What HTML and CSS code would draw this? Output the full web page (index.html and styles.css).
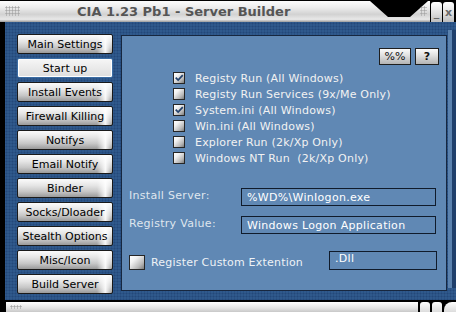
FILE: index.html
```html
<!DOCTYPE html>
<html lang="en">
  <head>
    <meta charset="UTF-8" />
    <meta name="viewport" content="width=device-width, initial-scale=1.0" />
    <title>CIA 1.23 Pb1 - Server Builder</title>
    <link rel="stylesheet" href="styles.css">
  </head>
  <body>
    <div class="window">
      <header class="titlebar">
        <div class="title-main">
          <span class="grip"></span>
          <span class="title">CIA 1.23 Pb1 - Server Builder</span>
          <span class="grip grip-right"></span>
        </div>
        <span class="winbtn">_</span>
        <span class="winbtn">x</span>
      </header>

      <div class="body">
        <div class="edge"></div>
        <div class="frame">
          <nav class="sidebar">
            <button class="side-btn">Main Settings</button>
            <button class="side-btn active">Start up</button>
            <button class="side-btn">Install Events</button>
            <button class="side-btn">Firewall Killing</button>
            <button class="side-btn">Notifys</button>
            <button class="side-btn">Email Notify</button>
            <button class="side-btn">Binder</button>
            <button class="side-btn">Socks/Dloader</button>
            <button class="side-btn">Stealth Options</button>
            <button class="side-btn">Misc/Icon</button>
            <button class="side-btn">Build Server</button>
          </nav>

          <main class="panel">
            <div class="toolbar">
              <button class="tool-btn wide">%%</button>
              <button class="tool-btn">?</button>
            </div>

            <ul class="checklist">
              <li><span class="check"><svg viewBox="0 0 12 12"><path d="M2 5.5 L5 8.5 L10.5 2.5" /></svg></span>Registy Run (All Windows)</li>
              <li><span class="check"></span>Registy Run Services (9x/Me Only)</li>
              <li><span class="check"><svg viewBox="0 0 12 12"><path d="M2 5.5 L5 8.5 L10.5 2.5" /></svg></span>System.ini (All Windows)</li>
              <li><span class="check"></span>Win.ini (All Windows)</li>
              <li><span class="check"></span>Explorer Run (2k/Xp Only)</li>
              <li><span class="check"></span>Windows NT Run&nbsp; (2k/Xp Only)</li>
            </ul>

            <div class="fields">
              <label>Install Server:</label>
              <div class="textbox">%WD%\WinIogon.exe</div>
              <label>Registry Value:</label>
              <div class="textbox">Windows Logon Application</div>
            </div>

            <div class="custom-row">
              <span class="check big"></span>
              <span class="custom-label">Register Custom Extention</span>
              <div class="textbox ext">.Dll</div>
            </div>
          </main>
          <div class="rail"></div>
        </div>
      </div>

      <footer class="statusbar">
        <div class="status-fill"><span class="grip grip-small"></span></div>
        <span class="status-piece"></span>
        <span class="status-piece"></span>
        <span class="status-piece last"></span>
      </footer>
    </div>
  </body>
</html>
```

FILE: styles.css
```css
body {
  margin: 0;
  background: #000;
  font-family: "DejaVu Sans", Verdana, sans-serif;
}
.window {
  width: 456px;
  height: 312px;
  display: flex;
  flex-direction: column;
  overflow: hidden;
}

/* title bar */
.titlebar {
  display: flex;
  height: 22px;
  gap: 1px;
}
.title-main {
  width: 430px;
  display: flex;
  align-items: center;
  background: linear-gradient(#ffffff 0%, #ececec 35%, #d2d2d2 65%, #e8e8e8 88%, #9a9a9a 100%);
  clip-path: polygon(0 1px, 370px 1px, 388px 17px, 410px 17px, 428px 1px, 430px 1px, 430px 22px, 0 22px);
}
.grip {
  width: 15px;
  height: 10px;
  margin-left: 5px;
  background-image: radial-gradient(circle, #a8a8a8 0.9px, transparent 1.2px);
  background-size: 3px 3px;
}
.grip-right {
  width: 7px;
  margin-left: auto;
  margin-right: 3px;
}
.title {
  margin-left: 57px;
  font-size: 13px;
  font-weight: bold;
  color: #555;
}
.winbtn {
  width: 11px;
  margin-top: 2px;
  border-radius: 3px 3px 0 0;
  background: linear-gradient(#ffffff, #dcdcdc 60%, #bdbdbd);
  color: #6a6a6a;
  font-size: 11px;
  font-weight: bold;
  display: flex;
  align-items: center;
  justify-content: center;
}

/* main area */
.body {
  display: flex;
  height: 278px;
}
.edge {
  width: 6px;
  background: #000;
}
.frame {
  flex: 1;
  display: flex;
  gap: 8px;
  padding: 12px 0 0 12px;
  background-color: #2f598c;
  background-image: radial-gradient(circle, #23487a 0.9px, transparent 1.1px);
  background-size: 3px 3px;
}
.rail {
  width: 4px;
  margin-left: -7px;
  margin-top: -4px;
  margin-bottom: 12px;
  background: #5b82ae;
  border-right: 4px solid #1f3f6b;
}

.sidebar {
  width: 96px;
  display: flex;
  flex-direction: column;
  gap: 4px;
}
.side-btn {
  height: 20px;
  padding: 0;
  border: 1px solid #1a1a1a;
  border-radius: 2px;
  background:
    linear-gradient(to right, transparent 84%, rgba(255, 255, 255, 0.9) 93%, transparent 100%),
    linear-gradient(#fbfbfb 0%, #e6e6e6 35%, #c6c6c6 70%, #9a9a9a 100%);
  font-family: "DejaVu Sans", Verdana, sans-serif;
  font-size: 11px;
  color: #000;
}
.side-btn.active {
  border-color: #3b6da4;
  background: linear-gradient(#f6f6f6, #dedede);
  box-shadow: inset 0 0 0 1px #fff;
}

.panel {
  width: 326px;
  height: 256px;
  margin-top: 1px;
  box-sizing: border-box;
  border: 1px solid #17273f;
  background: #6088b4;
  padding: 0 7px;
  display: flex;
  flex-direction: column;
  color: #f2f2f2;
  font-size: 11px;
}
.toolbar {
  display: flex;
  justify-content: flex-end;
  gap: 4px;
  margin-top: 12px;
}
.tool-btn {
  width: 24px;
  height: 17px;
  padding: 0;
  border: 1px solid #1e1e1e;
  background: linear-gradient(#fbfbfb 0%, #e2e2e2 40%, #b4b4b4 100%);
  font-family: "DejaVu Sans", Verdana, sans-serif;
  font-size: 11px;
  font-weight: bold;
  color: #111;
}
.tool-btn.wide {
  width: 32px;
  font-weight: normal;
}

.checklist {
  list-style: none;
  margin: 5px 0 0 44px;
  padding: 0;
}
.checklist li {
  height: 16px;
  display: flex;
  align-items: center;
  gap: 10px;
  letter-spacing: 0.2px;
}
.check {
  width: 12px;
  height: 12px;
  flex: none;
  box-sizing: border-box;
  border: 1px solid #262626;
  background: linear-gradient(135deg, #ffffff 0%, #f2f2f2 30%, #b8b8b8 72%, #7a7a7a 100%);
}
.check svg {
  display: block;
  width: 10px;
  height: 10px;
}
.check path {
  fill: none;
  stroke: #22416c;
  stroke-width: 2;
}
.check.big {
  width: 16px;
  height: 15px;
}

.fields {
  display: grid;
  grid-template-columns: 112px 195px;
  row-gap: 10px;
  margin-top: 22px;
  align-items: center;
}
.fields label {
  color: #dfe6ee;
  letter-spacing: 0.3px;
  margin-top: -3px;
}
.textbox {
  height: 18px;
  box-sizing: border-box;
  border: 1px solid #101b2b;
  padding-left: 5px;
  display: flex;
  align-items: center;
  color: #fff;
  letter-spacing: 0.3px;
}

.custom-row {
  display: flex;
  align-items: center;
  margin-top: 21px;
}
.custom-label {
  margin-left: 6px;
  letter-spacing: 0.2px;
  color: #eef2f6;
}
.textbox.ext {
  width: 108px;
  height: 19px;
  margin-left: auto;
  margin-right: 2px;
  margin-top: -5px;
  padding-bottom: 4px;
}

/* bottom bar */
.statusbar {
  height: 10px;
  margin-left: 6px;
  border-top: 2px solid #000;
  display: flex;
  gap: 2px;
}
.status-fill {
  flex: 1;
  display: flex;
  align-items: center;
  background: linear-gradient(#ffffff, #e4e4e4 60%, #c8c8c8);
}
.grip-small {
  width: 12px;
  height: 4px;
  margin-left: 4px;
}
.status-piece {
  width: 10px;
  border-radius: 3px 3px 0 0;
  background: linear-gradient(#ffffff, #dcdcdc);
}
.status-piece.last {
  width: 12px;
  border-radius: 8px 0 0 0;
}
```
